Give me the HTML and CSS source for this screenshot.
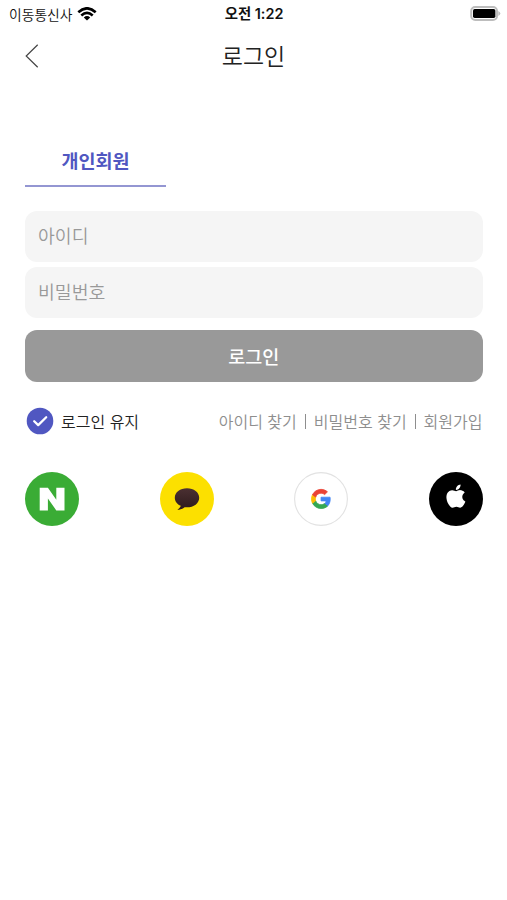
FILE: index.html
```html
<!DOCTYPE html>
<html lang="ko">
<head>
<meta charset="utf-8">
<title>로그인</title>
<link rel="stylesheet" href="styles.css">
</head>
<body>
<div class="status">
  <div class="carrier"><span>이동통신사</span>
    <svg class="wifi" viewBox="0 0 20 14" width="20" height="14"><g fill="none" stroke="#000" stroke-width="2.6"><path d="M1.3 5.2Q10-2.600 18.700 5.200"/><path d="M4.300 8.500Q10 3.400 15.700 8.500"/></g><path d="M6.800 10.400Q10 7.800 13.200 10.400L10 13.500Z"/></svg>
  </div>
  <div class="time">오전 1:22</div>
  <svg class="battery" viewBox="0 0 31 15" width="31" height="15"><rect x="1.200" y="1.100" width="25.800" height="12.800" rx="4" fill="#fff" stroke="#bdbdbd" stroke-width="2"/><rect x="3" y="3" width="22.400" height="9" rx="1.700"/><path d="M28.300 5q4 2.500 0 5Z" fill="#bdbdbd"/></svg>
</div>
<header class="header">
  <svg class="back" viewBox="0 0 14 24" width="14" height="24"><path d="M12.700.8 1.200 12l11.500 11.200" fill="none" stroke="#444" stroke-width="1.200"/></svg>
  <h1>로그인</h1>
</header>
<main>
  <div class="tab">개인회원</div>
  <form class="form">
    <input class="field" type="text" placeholder="아이디">
    <input class="field" type="password" placeholder="비밀번호">
    <button class="submit" type="button">로그인</button>
  </form>
  <div class="options">
    <div class="keep"><svg viewBox="0 0 28 28" width="28" height="28"><circle cx="14" cy="14" r="13.300" fill="#5057c1"/><path d="m8.200 14.200 4 3.900 8-7.800" fill="none" stroke="#fff" stroke-width="2.300" stroke-linecap="round" stroke-linejoin="round"/></svg><span>로그인 유지</span></div>
    <nav class="links"><a>아이디 찾기</a><i></i><a>비밀번호 찾기</a><i></i><a>회원가입</a></nav>
  </div>
  <div class="social">
    <svg viewBox="0 0 54 54"><circle cx="27" cy="27" r="27" fill="#3aac35"/><path d="M14.700 15.700h8.200l8.400 12.100V15.700h8.200v22.700h-8.200l-8.400-12v12h-8.200Z" fill="#fff"/></svg>
    <svg viewBox="0 0 54 54"><defs><linearGradient id="talk" x2="0" y2="1"><stop offset="0" stop-color="#4b3032"/><stop offset="1" stop-color="#2c1a1b"/></linearGradient></defs><circle cx="27" cy="27" r="27" fill="#fce000"/><path d="M27 16.200c-6.900 0-12.200 4.100-12.200 9.500 0 3.600 2.300 6.500 6 8.100-.4 1.300-1.600 2.800-3.500 4.300 3-.3 5.500-1.500 7.300-2.900 8.100 1 14.600-3.400 14.600-9.500 0-5.400-5.300-9.500-12.200-9.500Z" fill="url(#talk)"/></svg>
    <svg viewBox="0 0 54 54"><circle cx="27" cy="27" r="26.400" fill="#fff" stroke="#e2e2e2" stroke-width="1.100"/><g transform="translate(16.600 16.500) scale(.87)" stroke-width=".9"><path fill="#4285f4" stroke="#4285f4" d="M22.560 12.250c0-.780-.070-1.530-.200-2.250H12v4.260h5.920c-.260 1.370-1.040 2.530-2.210 3.310v2.770h3.570c2.080-1.920 3.280-4.740 3.280-8.090Z"/><path fill="#34a853" stroke="#34a853" d="M12 23c2.970 0 5.460-.980 7.280-2.660l-3.570-2.770c-.980.660-2.230 1.060-3.710 1.060-2.860 0-5.290-1.930-6.160-4.530H2.180v2.840C3.990 20.530 7.700 23 12 23Z"/><path fill="#fbbc05" stroke="#fbbc05" d="M5.840 14.090c-.220-.660-.350-1.360-.350-2.090s.130-1.430.350-2.090V7.070H2.180C1.430 8.550 1 10.220 1 12s.430 3.450 1.180 4.930l3.660-2.840Z"/><path fill="#ea4335" stroke="#ea4335" d="M12 5.380c1.620 0 3.060.560 4.210 1.640l3.150-3.150C17.450 2.090 14.970 1 12 1 7.700 1 3.990 3.470 2.180 7.070l3.660 2.840c.870-2.600 3.300-4.530 6.160-4.530Z"/></g></svg>
    <svg viewBox="0 0 54 54"><circle cx="27" cy="27" r="27"/><g transform="translate(12.900 10.200) scale(1.170 1.160)" fill="#fff"><path d="M18.710 19.500c-.830 1.240-1.710 2.450-3.050 2.470-1.340.030-1.770-.790-3.290-.790-1.530 0-2 .770-3.270.820-1.310.050-2.300-1.320-3.140-2.530C4.250 17 2.940 12.450 4.700 9.390c.870-1.520 2.430-2.480 4.120-2.510 1.280-.020 2.500.870 3.290.870.780 0 2.260-1.070 3.810-.910.650.030 2.470.260 3.640 1.980-.090.060-2.170 1.280-2.150 3.810.030 3.020 2.650 4.030 2.680 4.040-.030.070-.420 1.440-1.380 2.830M13 3.500c.730-.830 1.940-1.460 2.940-1.500.130 1.170-.340 2.350-1.040 3.190-.690.850-1.830 1.510-2.950 1.420-.150-1.150.410-2.350 1.050-3.110Z"/></g></svg>
  </div>
</main>
</body>
</html>
```
FILE: styles.css
```css
* { box-sizing: border-box; }
body { margin: 0; height: 900px; background: #fff; color: #222; overflow: hidden; font-family: "Noto Sans CJK KR", sans-serif; }
svg { display: block; flex: none; }
.status { display: grid; grid-template-columns: 1fr auto 1fr; align-items: center; height: 26px; padding: 0 6px 0 9px; font-size: 13.8px; line-height: 26px; color: #111; }
.carrier { display: flex; align-items: center; gap: 5px; height: 26px; line-height: 24px; font-weight: 350; }
.time { margin-right: 2px; font-family: Inter, "Noto Sans CJK KR", sans-serif; font-weight: 600; font-size: 14.4px; line-height: 27px; }
.battery { justify-self: end; }
.header { display: grid; grid-template-columns: 14px 1fr 14px; align-items: center; height: 60px; padding: 0 25px; }
.header h1 { margin: 0 0 3px; font-size: 23px; font-weight: 350; line-height: 34px; text-align: center; }
main { padding: 50px 24.5px 0 25px; }
.tab { width: 141px; height: 50.5px; border-bottom: 2px solid #9496d2; color: #5057c1; font-size: 18.5px; font-weight: 600; line-height: 49px; text-align: center; }
.form { display: flex; flex-direction: column; margin-top: 24.5px; }
.field { height: 51px; margin-bottom: 5px; padding: 0 13px 4px; border: 0; border-radius: 12px; background: #f5f5f5; font: 350 18.3px "Noto Sans CJK KR", sans-serif; }
.field::placeholder { color: #999; opacity: 1; }
.submit { height: 52px; margin-top: 6.5px; padding: 0; border: 0; border-radius: 12px; background: #999; color: #fff; font: 500 18.5px "Noto Sans CJK KR", sans-serif; }
.options { display: flex; justify-content: space-between; align-items: center; height: 28px; margin-top: 25.5px; padding-left: 1px; font-size: 16px; font-weight: 350; }
.keep { display: flex; align-items: center; gap: 7px; color: #222; }
.links { display: flex; align-items: center; color: #8e8e8e; }
.links i { width: 1px; height: 15px; margin: 0 8px; background: #8e8e8e; }
.social { display: flex; justify-content: space-between; margin-top: 37px; }
.social svg { width: 54px; height: 54px; }
```
